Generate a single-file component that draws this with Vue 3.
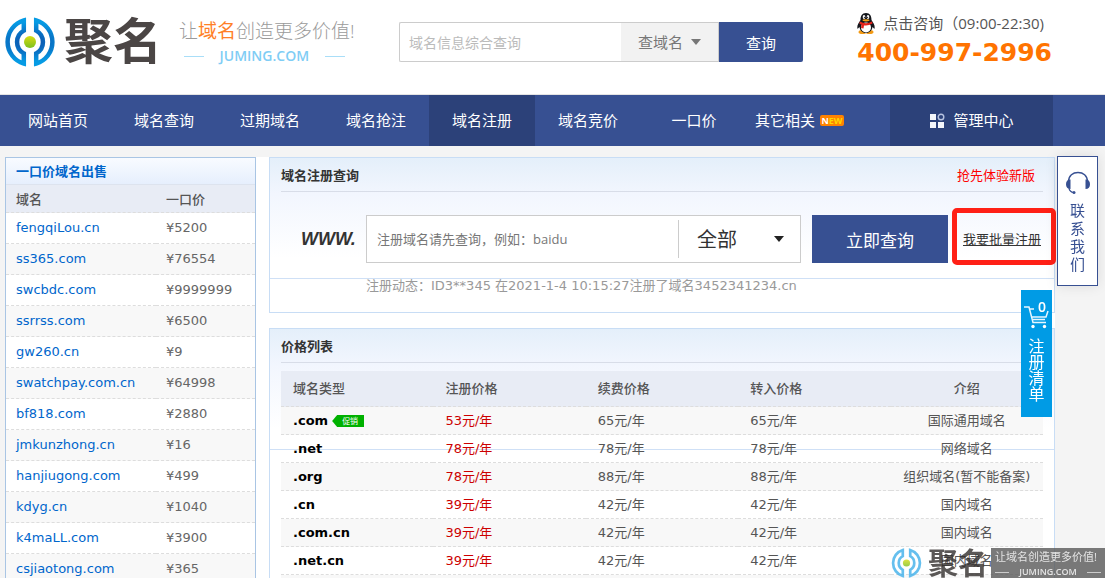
<script setup>
import { ref } from 'vue'

const navItems = ['网站首页', '域名查询', '过期域名', '域名抢注', '域名注册', '域名竞价', '一口价']
const activeNav = '域名注册'

const sales = [
  ['fengqiLou.cn', '5200'],
  ['ss365.com', '76554'],
  ['swcbdc.com', '9999999'],
  ['ssrrss.com', '6500'],
  ['gw260.cn', '9'],
  ['swatchpay.com.cn', '64998'],
  ['bf818.com', '2880'],
  ['jmkunzhong.cn', '16'],
  ['hanjiugong.com', '499'],
  ['kdyg.cn', '1040'],
  ['k4maLL.com', '3900'],
  ['csjiaotong.com', '365'],
]

const prices = [
  { name: '.com', reg: 53, renew: 65, move: 65, note: '国际通用域名', promo: true },
  { name: '.net', reg: 78, renew: 78, move: 78, note: '网络域名' },
  { name: '.org', reg: 78, renew: 88, move: 88, note: '组织域名(暂不能备案)' },
  { name: '.cn', reg: 39, renew: 42, move: 42, note: '国内域名' },
  { name: '.com.cn', reg: 39, renew: 42, move: 42, note: '国内域名' },
  { name: '.net.cn', reg: 39, renew: 42, move: 42, note: '国内域名' },
]

const keyword = ref('')
const domain = ref('')
</script>

<template>
  <div class="page">
    <header class="top">
      <a class="brand" href="#">
        <svg class="mark" viewBox="0 0 50 50" aria-hidden="true">
          <defs>
            <radialGradient id="ring" gradientUnits="userSpaceOnUse" cx="25" cy="25" r="25" gradientTransform="matrix(1.6 0 0 .8 -15 5)">
              <stop offset="0.3" stop-color="#0b5fb6" />
              <stop offset="1" stop-color="#069be4" />
            </radialGradient>
            <linearGradient id="dot" x1="0" y1="0" x2="0" y2="1">
              <stop offset="0" stop-color="#d8dc10" />
              <stop offset="1" stop-color="#7cc020" />
            </linearGradient>
          </defs>
          <g fill="none" stroke="url(#ring)" stroke-width="4.5">
            <path d="M18.800 3.400 A22.500 22.500 0 0 0 18.800 46.600 V36.400 A13 13 0 0 1 18.800 13.600 Z" />
            <path d="M31.200 3.400 A22.500 22.500 0 0 1 31.200 46.600 V36.400 A13 13 0 0 0 31.200 13.600 Z" />
          </g>
          <circle cx="25" cy="25" r="6" fill="url(#dot)" />
        </svg>
        <span class="brand-name">聚名</span>
        <span class="slogan">
          <span class="slogan-text">让<b>域名</b>创造更多价值!</span>
          <span class="slogan-site"><i></i>JUMING.COM<i></i></span>
        </span>
      </a>
      <form class="search" @submit.prevent>
        <input v-model="keyword" type="text" placeholder="域名信息综合查询" aria-label="域名信息综合查询" />
        <span class="select-wrap">
          <select aria-label="查询类型"><option>查域名</option></select>
        </span>
        <button type="submit">查询</button>
      </form>
      <div class="contact">
        <a class="consult" href="#">
          <svg class="penguin" viewBox="0 0 18 21" aria-hidden="true">
            <ellipse cx="5.500" cy="19" rx="4" ry="2" fill="#f39a14" />
            <ellipse cx="12.500" cy="19" rx="4" ry="2" fill="#f39a14" />
            <path d="M9 0 C5 0 3.500 3 3.500 7 C2 9.500 0 12 .3 15 C.5 16.500 1.500 15 2.500 14 C3 17.500 5.500 20 9 20 C12.500 20 15 17.500 15.500 14 C16.500 15 17.500 16.500 17.700 15 C18 12 16 9.500 14.500 7 C14.500 3 13 0 9 0Z" fill="#15171c" />
            <ellipse cx="9" cy="14.500" rx="5" ry="5" fill="#fff" />
            <ellipse cx="7" cy="4" rx="1.300" ry="1.900" fill="#fff" />
            <ellipse cx="11" cy="4" rx="1.300" ry="1.900" fill="#fff" />
            <circle cx="7.400" cy="4.300" r=".6" fill="#111" />
            <circle cx="10.600" cy="4.300" r=".6" fill="#111" />
            <ellipse cx="9" cy="7.300" rx="3.500" ry="1.100" fill="#f5a018" />
            <path d="M3 8.500 Q9 12 15 8.500 L15.500 10.500 Q11 13.200 7 12.400 L6.500 15.500 L4 15 L4.500 11.700 L2.300 10.500Z" fill="#e3231b" />
          </svg>
          <span>点击咨询（09:00-22:30)</span>
        </a>
        <strong class="phone">400-997-2996</strong>
      </div>
    </header>

    <nav class="nav">
      <a v-for="item in navItems" :key="item" href="#" :class="{ active: item === activeNav }">{{ item }}</a>
      <a href="#" class="more">其它相关<span class="new">N<em>EW</em></span></a>
      <a href="#" class="center">
        <svg viewBox="0 0 16 16" aria-hidden="true">
          <rect x="1" y="1" width="6" height="6" fill="#f4f6fb" />
          <rect x="1" y="9" width="6" height="6" fill="#f4f6fb" />
          <rect x="9" y="9" width="6" height="6" fill="#f4f6fb" />
          <circle cx="12" cy="4" r="2.800" fill="none" stroke="#b6c2e0" stroke-width="1.400" />
        </svg>
        管理中心
      </a>
    </nav>

    <main class="main">
      <aside class="side">
        <h2>一口价域名出售</h2>
        <table>
          <thead>
            <tr><th scope="col">域名</th><th scope="col">一口价</th></tr>
          </thead>
          <tbody>
            <tr v-for="[name, price] in sales" :key="name">
              <td><a href="#">{{ name }}</a></td>
              <td>¥{{ price }}</td>
            </tr>
          </tbody>
        </table>
      </aside>

      <div class="content">
        <section class="panel">
          <div class="panel-head">
            <h2>域名注册查询</h2>
            <a href="#">抢先体验新版</a>
          </div>
          <form class="register" @submit.prevent>
            <label for="domain" class="www">WWW.</label>
            <div class="field">
              <input id="domain" v-model="domain" type="text" placeholder="注册域名请先查询，例如：baidu" />
              <span class="select-wrap">
                <select aria-label="域名后缀"><option>全部</option></select>
              </span>
            </div>
            <button type="submit">立即查询</button>
            <a class="bulk" href="#">我要批量注册</a>
          </form>
          <p class="activity">注册动态：ID3**345 在2021-1-4 10:15:27注册了域名3452341234.cn</p>
        </section>

        <section class="panel">
          <div class="panel-head"><h2>价格列表</h2></div>
          <table class="prices">
            <thead>
              <tr>
                <th scope="col">域名类型</th>
                <th scope="col">注册价格</th>
                <th scope="col">续费价格</th>
                <th scope="col">转入价格</th>
                <th scope="col">介绍</th>
              </tr>
            </thead>
            <tbody>
              <tr v-for="p in prices" :key="p.name">
                <th scope="row">{{ p.name }}<span v-if="p.promo" class="promo">促销</span></th>
                <td class="reg">{{ p.reg }}元/年</td>
                <td>{{ p.renew }}元/年</td>
                <td>{{ p.move }}元/年</td>
                <td>{{ p.note }}</td>
              </tr>
              <tr><td colspan="5"></td></tr>
            </tbody>
          </table>
        </section>
      </div>
    </main>

    <a class="float-contact" href="#">
      <svg viewBox="0 0 26 24" aria-hidden="true">
        <path d="M3.500 11 C3.500 4.500 8 1.500 13 1.500 S22.500 4.500 22.500 11" fill="none" stroke="#375092" stroke-width="1.400" />
        <path d="M5.500 8.500 V18 C2.500 18 1 16 1 13.200 S2.500 8.500 5.500 8.500Z M20.500 8.500 V18 C23.500 18 25 16 25 13.200 S23.500 8.500 20.500 8.500Z" fill="#375092" />
        <path d="M4 17.500 Q5 21 8.500 21.500" fill="none" stroke="#375092" stroke-width="1.200" />
        <circle cx="9" cy="21.500" r="1.500" fill="#375092" />
      </svg>
      <span>联系我们</span>
    </a>

    <a class="float-cart" href="#">
      <span class="count">0</span>
      <svg viewBox="0 0 26 24" aria-hidden="true">
        <path d="M0 2 H5 L9 17.500 H22 M5 4 H10 M8 12 H22 L24 6 M9 14.500 H21" fill="none" stroke="#e6f6ff" stroke-width="1.500" />
        <circle cx="9" cy="21.500" r="1.700" fill="#fff" />
        <circle cx="20.500" cy="21.500" r="1.700" fill="#fff" />
      </svg>
      <span class="cart-text">注册清单</span>
    </a>

    <div class="watermark">
      <svg viewBox="0 0 50 50" aria-hidden="true">
        <g fill="none" stroke="#3fb0ea" stroke-width="4.5">
          <path d="M18.800 3.400 A22.500 22.500 0 0 0 18.800 46.600 V36.400 A13 13 0 0 1 18.800 13.600 Z" />
          <path d="M31.200 3.400 A22.500 22.500 0 0 1 31.200 46.600 V36.400 A13 13 0 0 0 31.200 13.600 Z" />
        </g>
        <circle cx="25" cy="25" r="6" fill="url(#dot)" />
      </svg>
      <span class="wm-name">聚名</span>
      <span class="wm-box">
        <span>让域名创造更多价值!</span>
        <span class="wm-site"><i></i>JUMING.COM<i></i></span>
      </span>
    </div>
  </div>
</template>

<style>
html,
body {
  height: 100%;
  overflow: hidden;
  background: #f4f4f4;
}
</style>

<style scoped>
.page {
  --blue: #375092;
  color: #555;
  font: 13px/20px "Open Sans", "Noto Sans CJK SC", sans-serif;
}
.page * {
  box-sizing: border-box;
}
a {
  color: inherit;
  text-decoration: none;
}
h2,
p {
  margin: 0;
}
h2 {
  font-size: 13px;
  font-weight: 500;
}
input,
select,
button {
  font-family: inherit;
  margin: 0;
  border: 0;
  border-radius: 0;
  outline: 0;
}
select {
  appearance: none;
  background: transparent;
  width: 100%;
}
table {
  width: 100%;
  border-collapse: separate;
  border-spacing: 0;
  table-layout: fixed;
}
th {
  text-align: left;
  font-weight: 500;
}

/* header */
.top {
  display: flex;
  align-items: flex-start;
  height: 95px;
  padding: 0 53px 0 5px;
  background: #fff;
  border-bottom: 1px solid #e4e4e4;
}
.brand {
  display: flex;
  align-items: flex-start;
  width: 394px;
}
.mark {
  width: 50px;
  height: 50px;
  margin-top: 17px;
}
.brand-name {
  margin: 10px 0 0 9px;
  font-size: 49px;
  line-height: 60px;
  font-weight: 700;
  color: #4b4645;
}
.slogan {
  margin: 19px 0 0 17px;
  color: #9b9b9b;
}
.slogan-text {
  display: block;
  font-size: 19px;
  line-height: 24px;
  font-weight: 300;
}
.slogan-text b {
  color: #ff7f27;
}
.slogan-site {
  display: flex;
  align-items: center;
  justify-content: space-between;
  margin: 4px 10px 0 5px;
  font-size: 14px;
  line-height: 18px;
  font-weight: 600;
  color: #7fcdf5;
}
.slogan-site i {
  width: 20px;
  height: 1px;
  background: #a9def8;
}
.search {
  display: flex;
  height: 40px;
  width: 404px;
  margin-top: 22px;
}
.search input {
  flex: 1;
  min-width: 0;
  padding: 0 9px;
  font-size: 14px;
  border: 1px solid #ccc;
  border-right: 0;
  border-radius: 2px 0 0 2px;
  color: #555;
}
.search input::placeholder {
  color: #bbb;
}
.select-wrap {
  position: relative;
}
.select-wrap::after {
  content: "";
  position: absolute;
  top: 50%;
  right: 17px;
  margin-top: -3px;
  border: 5px solid transparent;
  border-top: 6px solid #777;
  border-bottom: 0;
  pointer-events: none;
}
.search .select-wrap {
  width: 98px;
  background: #f2f2f2;
  border: solid #ccc;
  border-width: 1px 1px 1px 0;
}
.search select {
  height: 38px;
  padding: 0 17px;
  font-size: 15px;
  color: #777;
}
.search button {
  width: 84px;
  background: var(--blue);
  color: #fff;
  font-size: 15px;
  border-radius: 0 2px 2px 0;
}
.contact {
  margin: 12px 0 0 auto;
}
.consult {
  display: flex;
  align-items: center;
  gap: 8px;
  height: 22px;
  font-size: 15px;
}
.penguin {
  width: 18px;
  height: 21px;
}
.phone {
  display: block;
  margin-top: 4px;
  font: bold 25px/30px "DejaVu Sans", sans-serif;
  color: #ff7300;
}

/* navigation */
.nav {
  display: flex;
  height: 51px;
  padding: 0 52px 0 5px;
  background: var(--blue);
  color: #fff;
  font-size: 15px;
  line-height: 51px;
}
.nav a {
  width: 106px;
  text-align: center;
}
.nav .active,
.nav .center {
  background: #2c4179;
}
.nav .more {
  width: auto;
  padding-left: 8px;
  display: flex;
  align-items: center;
}
.new {
  width: 24px;
  height: 11px;
  margin-left: 5px;
  border-radius: 2px;
  background: #ff8200;
  font: bold 9px/11px "Open Sans", sans-serif;
}
.new em {
  color: #ffd800;
  font-style: normal;
}
.nav .center {
  display: flex;
  align-items: center;
  justify-content: center;
  gap: 8px;
  width: 163px;
  margin-left: auto;
}
.center svg {
  width: 16px;
  height: 16px;
}

/* body columns */
.main {
  display: grid;
  grid-template-columns: 251px 1fr;
  gap: 13px;
  margin: 11px 50px 0 5px;
  background: #fff;
}
.side {
  border: 1px solid #a9c5e4;
}
.side h2 {
  padding-left: 10px;
  line-height: 26px;
  font-weight: 700;
  color: #0066cc;
  background: linear-gradient(#f8fbff, #e6effd);
  border-bottom: 1px solid #dde3ee;
}
.side th,
.side td {
  padding: 0 0 0 10px;
  border-bottom: 1px dashed #ddd;
}
.side th {
  height: 28px;
  background: #e8ecf5;
}
.side th:first-child {
  width: 150px;
}
.side td {
  height: 31px;
  font-family: "DejaVu Sans", sans-serif;
  color: #666;
}
.side td a {
  color: #0066cc;
}
.side tbody tr:nth-child(even) {
  background: #f8f8f8;
}
.content {
  display: flex;
  flex-direction: column;
  gap: 15px;
  min-width: 0;
}
.panel {
  padding: 0 11px;
  border: 1px solid #c8ddf5;
  background:
    linear-gradient(#cfe0f6, #cfe0f6) 0 120px / 100% 1px no-repeat,
    linear-gradient(#e4effa, #f2f6fe 36px, #fff 100px) 0 0 / 100% 120px no-repeat;
}
.panel-head {
  display: flex;
  justify-content: space-between;
  line-height: 20px;
  padding: 7px 0 6px;
  border-bottom: 1px solid #d8dde8;
  color: #333;
}
.panel-head h2 {
  line-height: 20px;
  font-weight: 700;
}
.panel-head a {
  padding-right: 8px;
  color: #f00;
}
.register {
  display: flex;
  align-items: center;
  height: 48px;
  margin-top: 23px;
}
.www {
  width: 85px;
  padding-left: 20px;
  font: italic bold 18px/20px "Liberation Sans", sans-serif;
  color: #333;
}
.field {
  display: flex;
  flex: 1;
  height: 48px;
  padding: 4px 0;
  border: 1px solid #ccc;
  background: #fff;
}
.field input {
  flex: 1;
  min-width: 0;
  padding: 0 10px;
  font-size: 13px;
  border-right: 1px solid #ccc;
}
.field input::placeholder {
  color: #777;
}
.field .select-wrap {
  width: 121px;
}
.field .select-wrap::after {
  right: 16px;
  border-top-color: #222;
}
.field select {
  height: 38px;
  padding: 0 18px;
  font-size: 20px;
  color: #333;
}
.register button {
  width: 136px;
  height: 48px;
  margin-left: 11px;
  background: var(--blue);
  color: #fff;
  font-size: 17px;
}
.bulk {
  display: flex;
  align-items: center;
  justify-content: center;
  width: 104px;
  height: 57px;
  margin: 0 -13px 5px 4px;
  padding: 5px 4px 0 0;
  border: 5px solid #ff2016;
  border-radius: 5px;
  color: #333;
  text-decoration: underline;
}
.activity {
  padding: 13px 0 16px 85px;
  font-family: "DejaVu Sans", "Noto Sans CJK SC", sans-serif;
  color: #999;
}
.prices {
  margin-top: 8px;
  font-family: "DejaVu Sans", "Noto Sans CJK SC", sans-serif;
}
.prices th,
.prices td {
  height: 28px;
  padding: 0 0 0 12px;
  border-bottom: 1px dashed #ddd;
}
.prices thead th {
  height: 36px;
  background: #e8ecf5;
}
.prices tbody th {
  font-weight: 700;
  color: #000;
}
.prices th:last-child,
.prices td:last-child {
  padding: 0;
  text-align: center;
}
.prices tbody tr:nth-child(odd) {
  background: #f8f8f8;
}
.prices .reg {
  color: #c00;
}
.promo {
  display: inline-block;
  width: 32px;
  height: 12px;
  margin-left: 4px;
  padding-left: 4px;
  vertical-align: middle;
  background: #00b100;
  clip-path: polygon(0 50%, 5px 0, 100% 0, 100% 100%, 5px 100%);
  font: 8px/12px "Noto Sans CJK SC", sans-serif;
  text-align: center;
  color: #fff;
}

/* floating widgets */
.float-contact {
  position: fixed;
  top: 156px;
  right: 7px;
  display: flex;
  flex-direction: column;
  align-items: center;
  width: 41px;
  padding: 14px 0 12px;
  border: 1px solid var(--blue);
  background: #fff;
  box-shadow: 0 0 12px rgba(0, 0, 0, 0.1);
  color: var(--blue);
  font-size: 15px;
  line-height: 18px;
}
.float-contact svg {
  width: 26px;
  height: 24px;
  margin-bottom: 6px;
}
.float-contact span,
.float-cart .cart-text {
  width: 1em;
  word-break: break-all;
}
.float-cart {
  position: fixed;
  top: 290px;
  right: 53px;
  display: flex;
  flex-direction: column;
  align-items: center;
  width: 31px;
  padding: 15px 0 15px;
  background: #009be5;
  color: #fff;
  font-size: 16px;
  line-height: 16px;
}
.float-cart svg {
  width: 26px;
  height: 24px;
  margin-bottom: 9px;
}
.count {
  position: absolute;
  top: 9px;
  right: 6px;
  font-size: 14px;
  font-weight: 600;
}

.watermark {
  position: fixed;
  right: 0;
  bottom: 0;
  display: flex;
  height: 30px;
}
.watermark svg {
  width: 31px;
  height: 30px;
  opacity: 0.8;
}
.wm-name {
  margin: 0 3px 0 6px;
  font-size: 30px;
  line-height: 30px;
  font-weight: 700;
  color: rgba(50, 46, 45, 0.8);
}
.wm-box {
  width: 114px;
  padding-left: 4px;
  background: rgba(85, 85, 85, 0.78);
  color: #e4e4e4;
  font-size: 11px;
  line-height: 18px;
  white-space: nowrap;
}
.wm-box span {
  display: block;
}
.wm-box .wm-site {
  display: flex;
  align-items: center;
  justify-content: space-between;
  padding-right: 4px;
  font-size: 9px;
  line-height: 12px;
  font-weight: 600;
}
.wm-site i {
  width: 14px;
  height: 1px;
  background: #ccc;
}
</style>
